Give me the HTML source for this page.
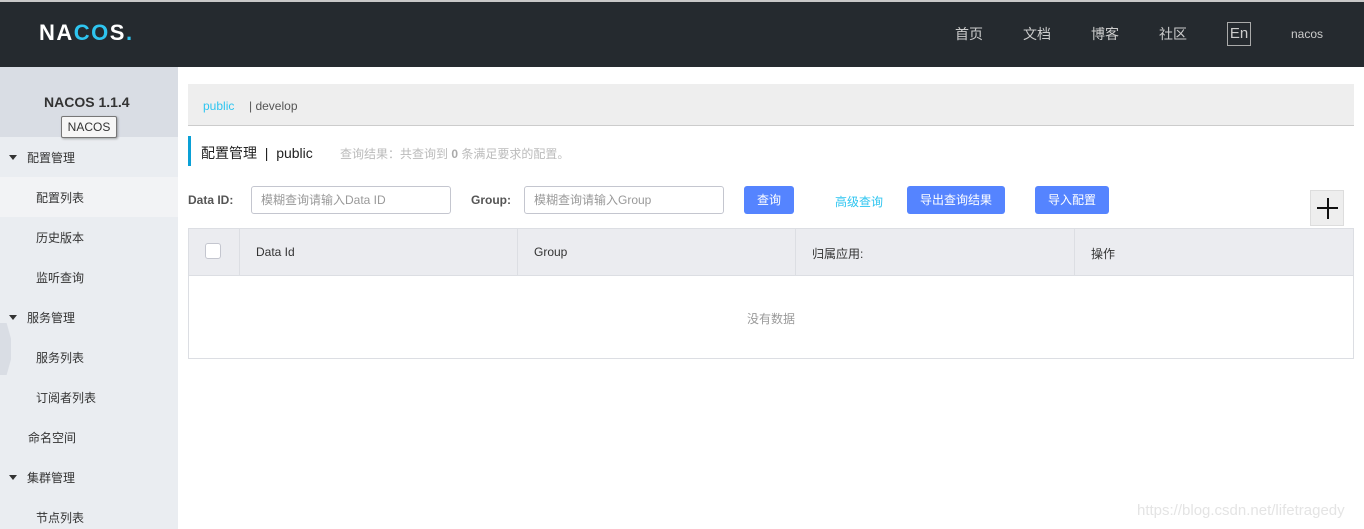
<!DOCTYPE html>
<html><head><meta charset="utf-8"><style>
*{margin:0;padding:0;box-sizing:border-box}
body{width:1364px;height:529px;overflow:hidden;background:#fff;font-family:"Liberation Sans","Noto Sans CJK SC",sans-serif;font-size:12px;color:#333;position:relative}
.a{position:absolute}
.hdr{left:0;top:0;width:1364px;height:67px;background:#252a2f;border-top:2px solid #c8c8c8}
.nav{color:#ccc;font-size:14px;top:24px}
.side{left:0;top:67px;width:178px;height:462px;background:#eaedf1}
.stop{left:0;top:67px;width:178px;height:70px;background:#d9dde4}
.si{font-size:12px;color:#333}
.tri{display:inline-block;width:0;height:0;border-left:4px solid transparent;border-right:4px solid transparent;border-top:5px solid #333;margin-right:10px;vertical-align:2px}
.btn{background:#5584ff;color:#fff;border-radius:3px;height:28px;line-height:28px;text-align:center;font-size:12px}
.inp{border:1px solid #c4c6cf;border-radius:3px;height:28px;line-height:26px;padding-left:9px;color:#999;font-size:12px}
</style></head><body>
<div class="a hdr"></div>
<div class="a" style="left:39px;top:20px;font-size:22px;font-weight:600;color:#fff;letter-spacing:1.5px">NA<span style="color:#2ec5f0">CO</span>S<span style="color:#2ec5f0">.</span></div>
<div class="a nav" style="left:955px">首页</div>
<div class="a nav" style="left:1023px">文档</div>
<div class="a nav" style="left:1091px">博客</div>
<div class="a nav" style="left:1159px">社区</div>
<div class="a" style="left:1227px;top:22px;width:24px;height:24px;border:1px solid #aaa;color:#ccc;font-size:15px;text-align:center;line-height:21px">En</div>
<div class="a" style="left:1291px;top:27px;color:#ccc;font-size:12px">nacos</div>

<div class="a side"></div>
<div class="a stop"></div>
<div class="a" style="left:0;top:323px;width:11px;height:52px;background:#d9dde4;clip-path:polygon(0 0,60% 0,100% 30%,100% 70%,60% 100%,0 100%)"></div>
<div class="a" style="left:44px;top:94px;font-size:14px;font-weight:bold;color:#333">NACOS 1.1.4</div>
<div class="a" style="left:61px;top:116px;width:56px;height:22px;border:1px solid #777;background:#f6f6f6;border-radius:2px;font-size:12px;line-height:20px;text-align:center;box-shadow:1px 1px 2px rgba(0,0,0,.3)">NACOS</div>
<div class="a" style="left:0;top:177px;width:178px;height:40px;background:#f2f3f5"></div>
<div class="a si" style="left:9px;top:149px"><span class="tri"></span>配置管理</div>
<div class="a si" style="left:36px;top:189px">配置列表</div>
<div class="a si" style="left:36px;top:229px">历史版本</div>
<div class="a si" style="left:36px;top:269px">监听查询</div>
<div class="a si" style="left:9px;top:309px"><span class="tri"></span>服务管理</div>
<div class="a si" style="left:36px;top:349px">服务列表</div>
<div class="a si" style="left:36px;top:389px">订阅者列表</div>
<div class="a si" style="left:28px;top:429px">命名空间</div>
<div class="a si" style="left:9px;top:469px"><span class="tri"></span>集群管理</div>
<div class="a si" style="left:36px;top:509px">节点列表</div>

<div class="a" style="left:188px;top:84px;width:1166px;height:42px;background:#eeeeee;border-bottom:1px solid #ccc"></div>
<div class="a" style="left:203px;top:99px;color:#2ec5f0">public</div>
<div class="a" style="left:249px;top:99px;color:#555">| develop</div>

<div class="a" style="left:188px;top:136px;width:3px;height:30px;background:#0aa0d6"></div>
<div class="a" style="left:201px;top:143px;font-size:14px;color:#222">配置管理 &nbsp;| &nbsp;public</div>
<div class="a" style="left:340px;top:145px;font-size:12px;color:#bbb">查询结果：共查询到 <b style="color:#aaa">0</b> 条满足要求的配置。</div>

<div class="a" style="left:188px;top:193px;font-weight:bold;color:#555;font-size:12px">Data ID:</div>
<div class="a inp" style="left:251px;top:186px;width:200px">模糊查询请输入Data ID</div>
<div class="a" style="left:471px;top:193px;font-weight:bold;color:#555">Group:</div>
<div class="a inp" style="left:524px;top:186px;width:200px">模糊查询请输入Group</div>
<div class="a btn" style="left:744px;top:186px;width:50px">查询</div>
<div class="a" style="left:835px;top:193px;color:#2ec5f0">高级查询</div>
<div class="a btn" style="left:907px;top:186px;width:98px">导出查询结果</div>
<div class="a btn" style="left:1035px;top:186px;width:74px">导入配置</div>
<div class="a" style="left:1310px;top:190px;width:34px;height:36px;background:#eee;border:1px solid #ddd"><div class="a" style="left:6px;top:16px;width:21px;height:2px;background:#111"></div><div class="a" style="left:15.5px;top:7px;width:2px;height:21px;background:#111"></div></div>

<div class="a" style="left:188px;top:228px;width:1166px;height:131px;border:1px solid #dcdee3"></div>
<div class="a" style="left:189px;top:229px;width:1164px;height:47px;background:#ebecf0;border-bottom:1px solid #dcdee3"></div>
<div class="a" style="left:239px;top:229px;width:1px;height:47px;background:#dcdee3"></div>
<div class="a" style="left:517px;top:229px;width:1px;height:47px;background:#dcdee3"></div>
<div class="a" style="left:795px;top:229px;width:1px;height:47px;background:#dcdee3"></div>
<div class="a" style="left:1074px;top:229px;width:1px;height:47px;background:#dcdee3"></div>
<div class="a" style="left:205px;top:243px;width:16px;height:16px;border:1px solid #c4c6cf;border-radius:3px;background:#fff"></div>
<div class="a" style="left:256px;top:245px">Data Id</div>
<div class="a" style="left:534px;top:245px">Group</div>
<div class="a" style="left:812px;top:245px">归属应用:</div>
<div class="a" style="left:1091px;top:245px">操作</div>
<div class="a" style="left:747px;top:310px;color:#999">没有数据</div>
<div class="a" style="left:1137px;top:502px;color:#e4e4e4;font-size:15px">https://blog.csdn.net/lifetragedy</div>
</body></html>
